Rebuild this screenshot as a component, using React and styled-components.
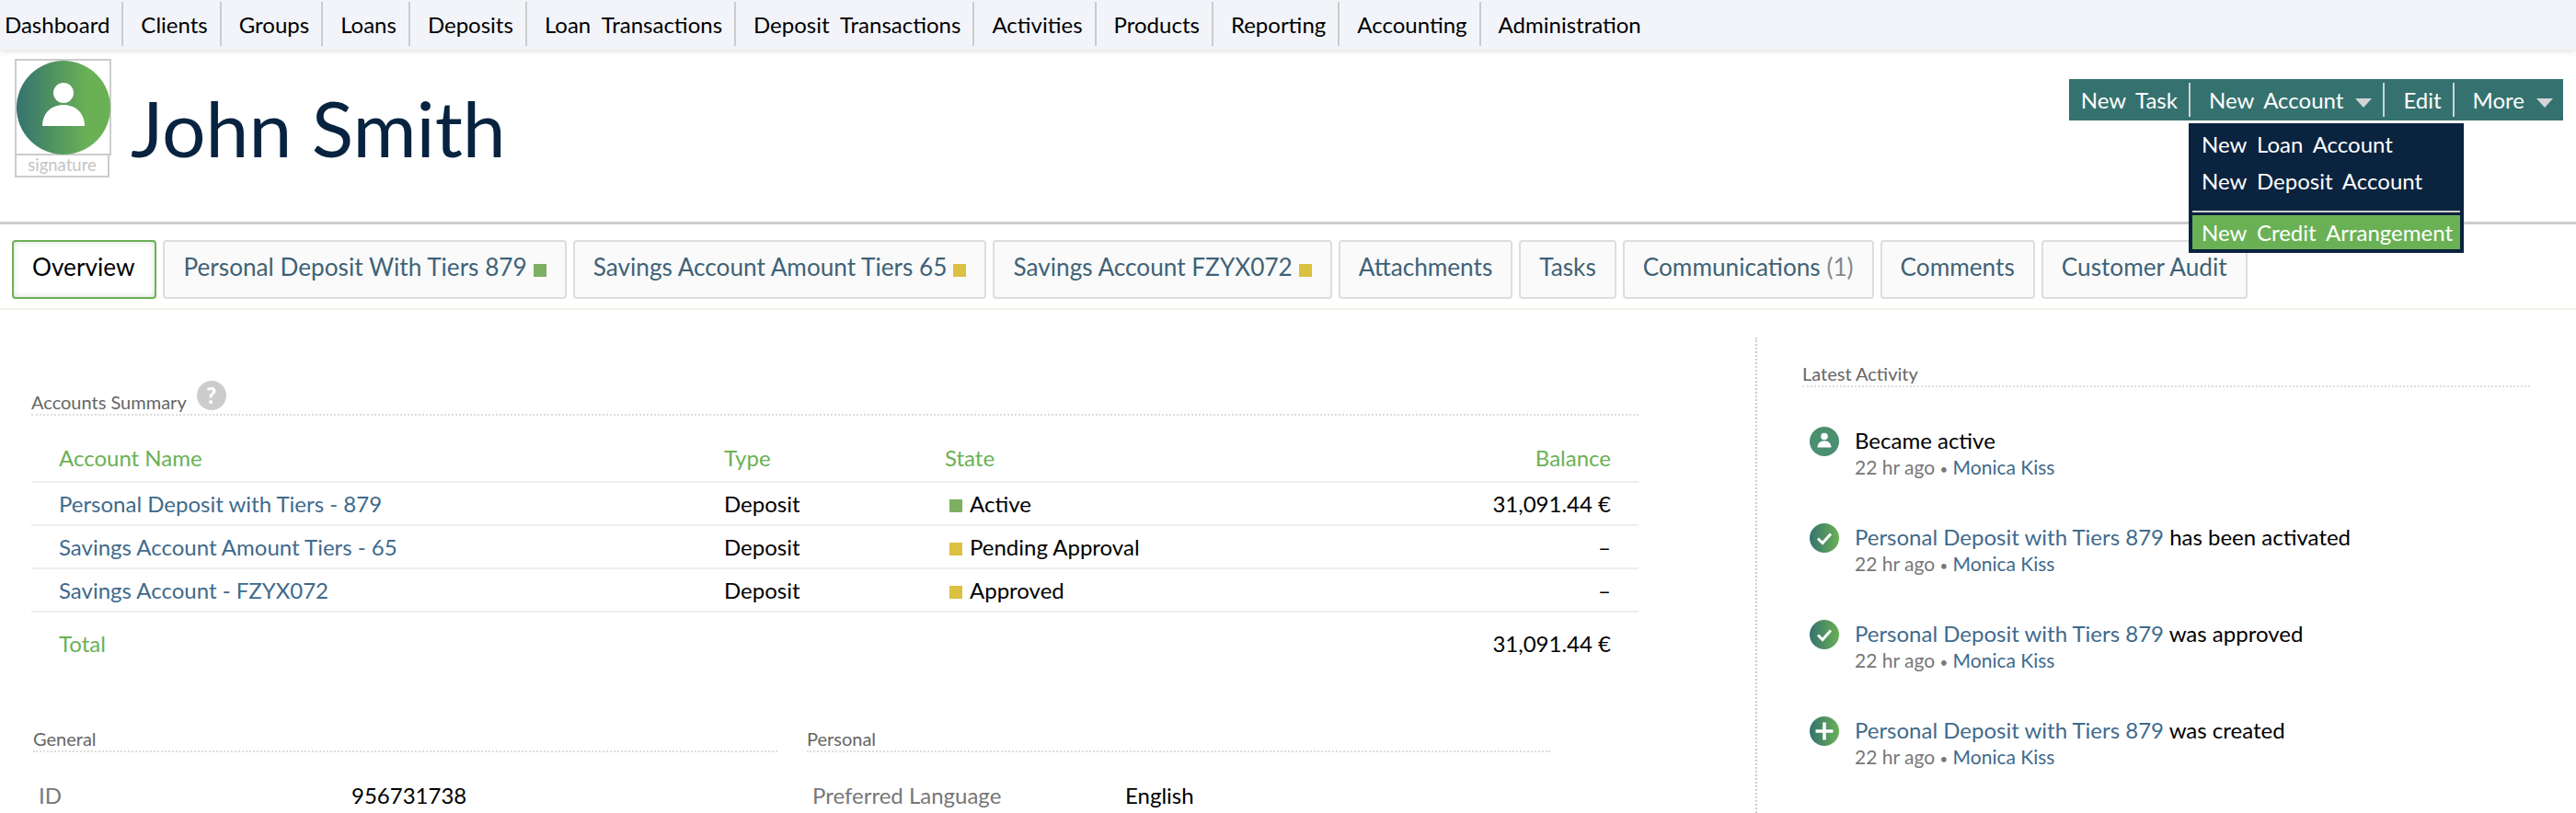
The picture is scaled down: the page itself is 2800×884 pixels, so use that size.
import React from 'react';
import styled, { createGlobalStyle } from 'styled-components';

const GlobalStyle = createGlobalStyle`
  html, body {
    margin: 0;
    height: 884px;
    overflow: hidden;
    background: #fff;
    font-family: Lato, "Liberation Sans", sans-serif;
    color: #000;
  }
  * { box-sizing: border-box; }
`;

const NAV_ITEMS = ['Dashboard', 'Clients', 'Groups', 'Loans', 'Deposits', 'Loan Transactions', 'Deposit Transactions', 'Activities', 'Products', 'Reporting', 'Accounting', 'Administration'];

const TABS = [
  { label: 'Overview', active: true },
  { label: 'Personal Deposit With Tiers 879', state: 'green' },
  { label: 'Savings Account Amount Tiers 65', state: 'yellow' },
  { label: 'Savings Account FZYX072', state: 'yellow' },
  { label: 'Attachments' },
  { label: 'Tasks' },
  { label: 'Communications', count: '(1)' },
  { label: 'Comments' },
  { label: 'Customer Audit' },
];

const ACCOUNTS = [
  { name: 'Personal Deposit with Tiers - 879', state: 'Active', color: 'green', balance: '31,091.44 €' },
  { name: 'Savings Account Amount Tiers - 65', state: 'Pending Approval', color: 'yellow', balance: '–' },
  { name: 'Savings Account - FZYX072', state: 'Approved', color: 'yellow', balance: '–' },
];

const ACTIVITY = [
  { icon: 'person', text: 'Became active' },
  { icon: 'check', link: 'Personal Deposit with Tiers 879', text: ' has been activated' },
  { icon: 'check', link: 'Personal Deposit with Tiers 879', text: ' was approved' },
  { icon: 'plus', link: 'Personal Deposit with Tiers 879', text: ' was created' },
];

const Badge = ({ kind, id }) => (
  <svg width="32" height="32" viewBox="0 0 32 32">
    <defs>
      <linearGradient id={id} x1="0" x2="1" y1="0" y2="0">
        <stop offset="0" stopColor="#35726f" />
        <stop offset="1" stopColor="#6ab155" />
      </linearGradient>
    </defs>
    <circle cx="16" cy="16" r="16" fill={kind === 'person' ? '#4a8f70' : `url(#${id})`} />
    {kind === 'person' && (
      <>
        <circle cx="16" cy="10.5" r="3.8" fill="#fff" />
        <path d="M8.5 22.5c0-4.4 3.3-7.2 7.5-7.2s7.5 2.8 7.5 7.2z" fill="#fff" />
      </>
    )}
    {kind === 'check' && <path d="M9 16.5l5 5 9-10" fill="none" stroke="#fff" strokeWidth="3" />}
    {kind === 'plus' && <path d="M16 6.5v19M6.5 16h19" fill="none" stroke="#fff" strokeWidth="3.6" />}
  </svg>
);

const App = () => {
  return (
    <>
      <GlobalStyle />
      <Nav>
        {NAV_ITEMS.map((item) => (
          <NavItem key={item}>{item}</NavItem>
        ))}
      </Nav>

      <Header>
        <AvatarBox>
          <Avatar>
            <svg width="102" height="102" viewBox="0 0 102 102">
              <defs>
                <linearGradient id="avatar" x1="0" x2="1" y1="0" y2="0">
                  <stop offset="0" stopColor="#35726f" />
                  <stop offset="0.75" stopColor="#6ab155" />
                </linearGradient>
              </defs>
              <circle cx="51" cy="51" r="51" fill="url(#avatar)" />
              <circle cx="51" cy="35" r="11" fill="#fff" />
              <path d="M28 71c0-14 10-23 23-23s23 9 23 23z" fill="#fff" />
            </svg>
          </Avatar>
          <Signature>signature</Signature>
        </AvatarBox>
        <Name>John Smith</Name>
        <Actions>
          <ActionButton>New Task</ActionButton>
          <ActionButton>
            New Account<Caret />
            <Dropdown>
              <DropdownItem>New Loan Account</DropdownItem>
              <DropdownItem>New Deposit Account</DropdownItem>
              <DropdownDivider />
              <DropdownItem $highlight>New Credit Arrangement</DropdownItem>
            </Dropdown>
          </ActionButton>
          <ActionButton>Edit</ActionButton>
          <ActionButton>
            More<Caret />
          </ActionButton>
        </Actions>
      </Header>

      <Tabs>
        {TABS.map((tab) => (
          <Tab key={tab.label} $active={tab.active}>
            {tab.label}
            {tab.count && <TabCount> {tab.count}</TabCount>}
            {tab.state && <TabState $color={tab.state} />}
          </Tab>
        ))}
      </Tabs>

      <Content>
        <Main>
          <SummaryTitle>
            Accounts Summary<Help>?</Help>
          </SummaryTitle>
          <AccountsTable>
            <colgroup>
              <col width="723" />
              <col width="240" />
              <col />
              <col />
            </colgroup>
            <thead>
              <tr>
                <HeadCell>Account Name</HeadCell>
                <HeadCell>Type</HeadCell>
                <HeadCell>State</HeadCell>
                <HeadCell $right>Balance</HeadCell>
              </tr>
            </thead>
            <tbody>
              {ACCOUNTS.map((a) => (
                <tr key={a.name}>
                  <Cell>
                    <Link>{a.name}</Link>
                  </Cell>
                  <Cell>Deposit</Cell>
                  <Cell>
                    <StateSquare $color={a.color} />
                    {a.state}
                  </Cell>
                  <Cell $right>{a.balance}</Cell>
                </tr>
              ))}
            </tbody>
            <tfoot>
              <tr>
                <TotalCell $green>Total</TotalCell>
                <TotalCell />
                <TotalCell />
                <TotalCell $right>31,091.44 €</TotalCell>
              </tr>
            </tfoot>
          </AccountsTable>

          <Details>
            <div>
              <SectionTitle>General</SectionTitle>
              <DetailRow>
                <DetailLabel>ID</DetailLabel>
                <span>956731738</span>
              </DetailRow>
            </div>
            <div>
              <SectionTitle>Personal</SectionTitle>
              <DetailRow>
                <DetailLabel>Preferred Language</DetailLabel>
                <span>English</span>
              </DetailRow>
            </div>
          </Details>
        </Main>

        <Sidebar>
          <SectionTitle>Latest Activity</SectionTitle>
          <ActivityList>
            {ACTIVITY.map((item, i) => (
              <ActivityItem key={i}>
                <Badge kind={item.icon} id={`badge${i}`} />
                <div>
                  <ActivityText>
                    {item.link && <Link>{item.link}</Link>}
                    {item.text}
                  </ActivityText>
                  <ActivityMeta>
                    22 hr ago <Dot>•</Dot> <Link>Monica Kiss</Link>
                  </ActivityMeta>
                </div>
              </ActivityItem>
            ))}
          </ActivityList>
        </Sidebar>
      </Content>
    </>
  );
};
export default App;

const stateColor = (c) => (c === 'green' ? '#7eb062' : '#dcc03f');

const Nav = styled.div`
  display: flex;
  height: 54px;
  padding-top: 2px;
  background: #f2f4f9;
  box-shadow: 0 2px 6px rgba(0, 0, 0, 0.12);
`;
const NavItem = styled.div`
  height: 48px;
  padding: 0 13px 0 19px;
  border-right: 2px solid #ccc;
  font-size: 24px;
  line-height: 50px;
  word-spacing: 6px;
  white-space: nowrap;
  &:first-child {
    padding-left: 5px;
  }
  &:last-child {
    border-right: 0;
  }
`;

const Header = styled.div`
  display: flex;
  align-items: flex-start;
  height: 190px;
  padding: 10px 14px 0 16px;
  border-bottom: 3px solid #ccc;
`;
const AvatarBox = styled.div`
  display: flex;
  flex-direction: column;
  width: 105px;
`;
const Avatar = styled.div`
  height: 105px;
  border: 2px solid #ccc;
  svg {
    display: block;
  }
`;
const Signature = styled.div`
  width: 103px;
  height: 24px;
  border: 2px solid #ccc;
  border-top: 0;
  color: #c4c4c4;
  font-size: 18.5px;
  line-height: 20px;
  text-align: center;
`;
const Name = styled.h1`
  margin: 23px 0 0 21px;
  color: #07233f;
  font-size: 84px;
  font-weight: 400;
  line-height: 104px;
`;
const Actions = styled.div`
  display: flex;
  height: 45px;
  margin: 22px 0 0 auto;
  padding: 4px 0;
  background: #35726f;
`;
const ActionButton = styled.div`
  position: relative;
  display: flex;
  align-items: center;
  padding: 0 12px 0 20px;
  border-right: 2px solid #c9d6d5;
  color: #fff;
  font-size: 24px;
  word-spacing: 5px;
  white-space: nowrap;
  &:first-child {
    padding-left: 13px;
  }
  &:last-child {
    padding-right: 11px;
    border-right: 0;
  }
`;
const Caret = styled.i`
  width: 0;
  height: 0;
  margin: 6px 0 0 13px;
  border-style: solid;
  border-width: 10px 9px 0;
  border-color: #d4d4d4 transparent transparent;
`;
const Dropdown = styled.div`
  position: absolute;
  z-index: 5;
  top: 44px;
  left: -2px;
  width: 299px;
  height: 141px;
  padding: 3px 4px;
  background: #0a233f;
`;
const DropdownItem = styled.div`
  height: ${(p) => (p.$highlight ? '37px' : '40px')};
  padding-left: 10px;
  background: ${(p) => (p.$highlight ? '#6ab155' : 'transparent')};
  font-size: 24px;
  line-height: ${(p) => (p.$highlight ? '37px' : '40px')};
`;
const DropdownDivider = styled.div`
  height: 2px;
  margin: 12px 0 3px;
  background: #ccc;
`;

const Tabs = styled.div`
  display: flex;
  gap: 7px;
  height: 93px;
  padding: 17px 0 0 13px;
  border-bottom: 2px solid #f0f2e8;
`;
const Tab = styled.div`
  display: flex;
  align-items: center;
  height: 64px;
  padding: 0 ${(p) => (p.$active ? '22px' : '20px')} 6px 20px;
  border: 2px solid ${(p) => (p.$active ? '#6ab155' : '#ddd')};
  border-radius: 4px;
  background: ${(p) => (p.$active ? '#fff' : '#fafafa')};
  box-shadow: ${(p) => (p.$active ? 'inset 0 0 6px rgba(0, 0, 0, 0.15)' : 'none')};
  color: ${(p) => (p.$active ? '#000' : '#3f6277')};
  font-size: 26.2px;
  white-space: pre;
`;
const TabCount = styled.span`
  color: #888;
`;
const TabState = styled.i`
  width: 14px;
  height: 14px;
  margin: 8px 0 0 7px;
  background: ${(p) => stateColor(p.$color)};
`;

const Content = styled.div`
  display: grid;
  grid-template-columns: 1908px 1fr;
`;
const Main = styled.div`
  padding: 75px 127px 0 34px;
`;
const SummaryTitle = styled.div`
  display: flex;
  align-items: flex-end;
  height: 40px;
  border-bottom: 2px dotted #ddd;
  color: #666;
  font-size: 20px;
  line-height: 26px;
`;
const Help = styled.span`
  width: 32px;
  height: 32px;
  margin: 0 0 4px 11px;
  border-radius: 50%;
  background: #ccc;
  color: #fff;
  font-size: 24px;
  font-weight: 900;
  line-height: 32px;
  text-align: center;
`;
const AccountsTable = styled.table`
  width: 100%;
  margin-top: 25px;
  border-collapse: collapse;
  table-layout: fixed;
  font-size: 24px;
`;
const HeadCell = styled.th`
  height: 47px;
  padding: 0 30px 6px;
  border-bottom: 2px solid #eee;
  color: #6ab155;
  font-weight: 400;
  text-align: ${(p) => (p.$right ? 'right' : 'left')};
`;
const Cell = styled.td`
  height: 47px;
  padding: 0 30px;
  border-bottom: 2px solid #eee;
  text-align: ${(p) => (p.$right ? 'right' : 'left')};
`;
const TotalCell = styled.td`
  height: 74px;
  padding: 0 30px 6px;
  color: ${(p) => (p.$green ? '#6ab155' : '#000')};
  text-align: ${(p) => (p.$right ? 'right' : 'left')};
`;
const Link = styled.span`
  color: #3f6a8c;
`;
const StateSquare = styled.i`
  display: inline-block;
  width: 14px;
  height: 14px;
  margin: 0 8px 0 5px;
  background: ${(p) => stateColor(p.$color)};
`;

const Details = styled.div`
  display: grid;
  grid-template-columns: 809px 808px;
  gap: 32px;
  margin: 52px 0 0 2px;
`;
const SectionTitle = styled.div`
  height: 27px;
  border-bottom: 2px dotted #ddd;
  color: #666;
  font-size: 20px;
  line-height: 24px;
`;
const DetailRow = styled.div`
  display: grid;
  grid-template-columns: 340px 1fr;
  padding: 32px 0 0 6px;
  font-size: 24px;
`;
const DetailLabel = styled.span`
  color: #777;
`;

const Sidebar = styled.div`
  height: 517px;
  margin-top: 30px;
  padding: 27px 50px 0 49px;
  border-left: 2px dotted #ccc;
`;
const ActivityList = styled.div`
  display: flex;
  flex-direction: column;
  gap: 33px;
  margin-top: 43px;
`;
const ActivityItem = styled.div`
  display: grid;
  grid-template-columns: 32px 1fr;
  gap: 17px;
  height: 72px;
  padding-left: 8px;
`;
const ActivityText = styled.div`
  font-size: 24px;
  line-height: 30px;
`;
const ActivityMeta = styled.div`
  color: #777;
  font-size: 21px;
  line-height: 28px;
`;
const Dot = styled.span`
  font-size: 15px;
`;
